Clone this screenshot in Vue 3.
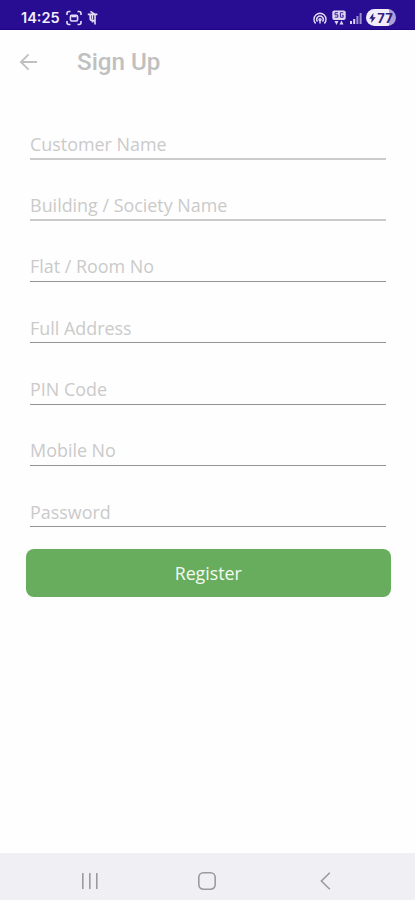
<template>
  <div class="screen">
    <div class="status-bar">
      <span class="clock">14:25</span>
      <svg class="scan-icon" width="16" height="16" viewBox="0 0 16 16">
        <path d="M1 5V3.5Q1 1.5 3 1.5H4.5M11.5 1.5H13Q15 1.5 15 3.5V5M15 11V12.5Q15 14.5 13 14.5H11.5M4.5 14.5H3Q1 14.5 1 12.5V11" />
        <rect x="4.4" y="5.4" width="7.2" height="5.6" rx="1.4" />
        <path d="M5.5 6.5H10.5" />
      </svg>
      <svg class="pay-icon" width="12" height="16" viewBox="0 0 12 16">
        <path d="M0.8 4.4H10.4M3.4 1.4L8 4.4V14.6M3.2 4.5V8.2Q3.2 10.6 5.4 10.6H8M5.4 5V9.5M5.6 11V12.6" />
      </svg>
      <span class="spacer"></span>
      <svg class="hotspot-icon" width="14" height="14" viewBox="0 0 14 14">
        <path d="M2.6 12.4A6 6 0 1 1 11.4 12.4M4.5 10.6A3.3 3.3 0 1 1 9.5 10.6" />
        <circle cx="7" cy="8.6" r="1" />
        <path d="M7 9V12.5" />
      </svg>
      <svg class="net-icon" width="14" height="16" viewBox="0 0 14 16">
        <rect x="0.3" y="0.5" width="13.4" height="9.6" rx="2" />
        <path class="dark" d="M6 2.7H3V4.8H5.8V7.2H2.8M11.3 2.7H8.4V7.2H11.2V5.2H10" />
        <path class="arrows" d="M2.5 11H6.5L4.5 15ZM7.5 14.5H11.5L9.5 10.5Z" />
      </svg>
      <svg class="signal-icon" width="12" height="12" viewBox="0 0 12 12">
        <rect x="0" y="9" width="2" height="3" />
        <rect x="3.2" y="7" width="2" height="5" />
        <rect class="dim" x="6.4" y="4" width="2" height="8" />
        <rect class="dim" x="9.6" y="1" width="2" height="11" />
      </svg>
      <span class="battery">
        <svg width="7" height="10" viewBox="0 0 7 10">
          <path d="M4.4 0L0.2 5.8H2.6L2.2 10L6.8 4.2H4.2Z" />
        </svg>
        <span>77</span>
      </span>
    </div>

    <header class="app-bar">
      <button class="back-btn" aria-label="Back">
        <svg width="20" height="20" viewBox="0 0 20 20">
          <path d="M19 10H3M10.6 2.3L2.9 10L10.6 17.7" />
        </svg>
      </button>
      <h1>Sign Up</h1>
    </header>

    <form class="signup-form" @submit.prevent>
      <div v-for="field in fields" :key="field.key" class="form-group" :class="{ thick: field.thick }">
        <input v-model="form[field.key]" :type="field.type || 'text'" :placeholder="field.label" />
      </div>
      <button type="submit" class="register-btn">Register</button>
    </form>

    <nav class="nav-bar">
      <svg width="20" height="20" viewBox="0 0 20 20">
        <path d="M2.8 2V18M9.8 2V18M16.8 2V18" />
      </svg>
      <svg width="20" height="20" viewBox="0 0 20 20">
        <rect x="1.8" y="1.8" width="16.4" height="16.4" rx="4.6" />
      </svg>
      <svg width="20" height="20" viewBox="0 0 20 20">
        <path d="M14.8 1.8L6.4 10L14.8 18.2" />
      </svg>
    </nav>
  </div>
</template>

<script setup>
import { reactive } from 'vue'

const fields = [
  { key: 'name', label: 'Customer Name', thick: true },
  { key: 'building', label: 'Building / Society Name', thick: true },
  { key: 'flat', label: 'Flat / Room No' },
  { key: 'address', label: 'Full Address' },
  { key: 'pin', label: 'PIN Code' },
  { key: 'mobile', label: 'Mobile No', type: 'tel' },
  { key: 'password', label: 'Password', type: 'password' }
]

const form = reactive({
  name: '',
  building: '',
  flat: '',
  address: '',
  pin: '',
  mobile: '',
  password: ''
})
</script>

<style>
body {
  background: #fefefe;
}
</style>

<style scoped>
.screen {
  height: 900px;
  display: flex;
  flex-direction: column;
  background: #fefefe;
  font-family: "Open Sans", "Noto Sans", sans-serif;
}
.status-bar {
  height: 30px;
  flex: none;
  box-sizing: border-box;
  display: flex;
  align-items: center;
  padding: 6px 19px 0 21px;
  background: #280c92;
  border-bottom: 1px solid #1d0583;
  color: #f2effb;
}
.clock {
  font-family: Inter, Roboto, sans-serif;
  font-size: 14.5px;
  font-weight: 600;
  width: 45px;
}
.status-bar svg {
  fill: none;
  stroke: #e4dff5;
  stroke-width: 1.6;
}
.pay-icon {
  margin-left: 5px;
}
.spacer {
  flex: 1;
}
.hotspot-icon {
  margin-right: 5px;
}
.status-bar .hotspot-icon {
  stroke-width: 1.4;
}
.net-icon {
  margin-right: 4px;
}
.status-bar .net-icon,
.status-bar .signal-icon {
  fill: #ddd6f2;
  stroke: none;
}
.net-icon .dark {
  fill: none;
  stroke: #3a2299;
  stroke-width: 1;
}
.signal-icon {
  margin-right: 4px;
}
.signal-icon .dim {
  opacity: 0.65;
}
.battery {
  width: 30px;
  height: 17px;
  box-sizing: border-box;
  display: flex;
  align-items: center;
  justify-content: center;
  gap: 1px;
  border-radius: 9px;
  background: linear-gradient(90deg, #f1eefa 77%, #aca0d9 77%);
  color: #32207d;
  font: 700 13px Inter, Roboto, sans-serif;
}
.status-bar .battery svg {
  fill: #32207d;
  stroke: none;
}
.app-bar {
  height: 64px;
  flex: none;
  display: flex;
  align-items: center;
  padding-left: 17.5px;
}
.back-btn {
  display: flex;
  padding: 0;
  border: none;
  background: none;
}
.back-btn svg {
  fill: none;
  stroke: #c0c0c0;
  stroke-width: 1.8;
}
.app-bar h1 {
  margin: 0 0 0 39.5px;
  font: 500 24.2px Roboto, sans-serif;
  color: #c0c0c0;
}
.signup-form {
  flex: 1;
  padding: 37px 24px 0 25.5px;
}
.form-group {
  height: 61.33px;
  box-sizing: border-box;
  padding: 0 5px 0 4px;
}
.form-group input {
  display: block;
  width: 100%;
  height: 28.5px;
  box-sizing: border-box;
  padding: 0 0 2px 0.6px;
  border: none;
  border-bottom: 1px solid #949494;
  border-radius: 0;
  background: none;
  outline: none;
  font: 400 17.9px "Open Sans", "Noto Sans", sans-serif;
  color: #555;
}
.form-group.thick input {
  border-bottom: 2px solid #cbcbcb;
  padding-bottom: 1px;
}
.form-group input::placeholder {
  color: #cacaca;
  opacity: 1;
}
.register-btn {
  display: block;
  width: 100%;
  height: 48px;
  padding: 0;
  margin-top: -11.5px;
  border: none;
  border-radius: 8px;
  background: #68ad5d;
  color: #f4faf2;
  font: 400 17.8px "Open Sans", "Noto Sans", sans-serif;
}
.nav-bar {
  height: 47px;
  flex: none;
  box-sizing: border-box;
  display: flex;
  justify-content: space-between;
  align-items: center;
  padding: 8px 80.5px 0 79.5px;
  background: #f0eff4;
}
.nav-bar svg {
  fill: none;
  stroke: #9b9a9f;
  stroke-width: 1.6;
}
</style>
